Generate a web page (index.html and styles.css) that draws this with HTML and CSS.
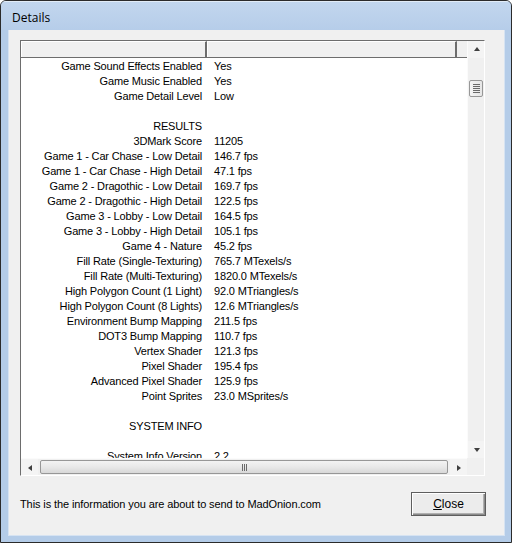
FILE: index.html
```html
<!DOCTYPE html>
<html lang="en">
<head>
    <meta charset="UTF-8">
    <title>Details</title>
    <link rel="stylesheet" href="styles.css">
</head>
<body>
<div class="window">
    <div class="titlebar">Details</div>
    <div class="client">
        <div class="listview">
            <div class="list_area">
                <div class="list_head">
                    <div class="col1"></div>
                    <div class="col2"></div>
                    <div class="filler"></div>
                </div>
                <div class="list_body">
                    <div class="row"><span class="name">Game Sound Effects Enabled</span><span class="value">Yes</span></div>
                    <div class="row"><span class="name">Game Music Enabled</span><span class="value">Yes</span></div>
                    <div class="row"><span class="name">Game Detail Level</span><span class="value">Low</span></div>
                    <div class="row"><span class="name"></span><span class="value"></span></div>
                    <div class="row"><span class="name">RESULTS</span><span class="value"></span></div>
                    <div class="row"><span class="name">3DMark Score</span><span class="value">11205</span></div>
                    <div class="row"><span class="name">Game 1 - Car Chase - Low Detail</span><span class="value">146.7 fps</span></div>
                    <div class="row"><span class="name">Game 1 - Car Chase - High Detail</span><span class="value">47.1 fps</span></div>
                    <div class="row"><span class="name">Game 2 - Dragothic - Low Detail</span><span class="value">169.7 fps</span></div>
                    <div class="row"><span class="name">Game 2 - Dragothic - High Detail</span><span class="value">122.5 fps</span></div>
                    <div class="row"><span class="name">Game 3 - Lobby - Low Detail</span><span class="value">164.5 fps</span></div>
                    <div class="row"><span class="name">Game 3 - Lobby - High Detail</span><span class="value">105.1 fps</span></div>
                    <div class="row"><span class="name">Game 4 - Nature</span><span class="value">45.2 fps</span></div>
                    <div class="row"><span class="name">Fill Rate (Single-Texturing)</span><span class="value">765.7 MTexels/s</span></div>
                    <div class="row"><span class="name">Fill Rate (Multi-Texturing)</span><span class="value">1820.0 MTexels/s</span></div>
                    <div class="row"><span class="name">High Polygon Count (1 Light)</span><span class="value">92.0 MTriangles/s</span></div>
                    <div class="row"><span class="name">High Polygon Count (8 Lights)</span><span class="value">12.6 MTriangles/s</span></div>
                    <div class="row"><span class="name">Environment Bump Mapping</span><span class="value">211.5 fps</span></div>
                    <div class="row"><span class="name">DOT3 Bump Mapping</span><span class="value">110.7 fps</span></div>
                    <div class="row"><span class="name">Vertex Shader</span><span class="value">121.3 fps</span></div>
                    <div class="row"><span class="name">Pixel Shader</span><span class="value">195.4 fps</span></div>
                    <div class="row"><span class="name">Advanced Pixel Shader</span><span class="value">125.9 fps</span></div>
                    <div class="row"><span class="name">Point Sprites</span><span class="value">23.0 MSprites/s</span></div>
                    <div class="row"><span class="name"></span><span class="value"></span></div>
                    <div class="row"><span class="name">SYSTEM INFO</span><span class="value"></span></div>
                    <div class="row"><span class="name"></span><span class="value"></span></div>
                    <div class="row"><span class="name">System Info Version</span><span class="value">2.2</span></div>
                </div>
            </div>
            <div class="vscroll">
                <div class="sb_btn"><i class="arrow up"></i></div>
                <div class="sb_track">
                    <div class="v_thumb"><i class="grip"></i></div>
                </div>
                <div class="sb_btn"><i class="arrow down"></i></div>
            </div>
            <div class="hscroll">
                <div class="sb_btn"><i class="arrow left"></i></div>
                <div class="sb_track h_track">
                    <div class="h_thumb"><i class="grip_h"></i></div>
                </div>
                <div class="sb_btn"><i class="arrow right"></i></div>
            </div>
            <div class="corner"></div>
        </div>
        <div class="footer">
            <span class="info">This is the information you are about to send to MadOnion.com</span>
            <button class="close_btn"><u>C</u>lose</button>
        </div>
    </div>
</div>
</body>
</html>
```

FILE: styles.css
```css
html, body {
    margin: 0;
    padding: 0;
    background: #fff;
}

.window {
    width: 510px;
    height: 541px;
    border: solid 1px #2b2b2b;
    border-radius: 6px 6px 0 0;
    background: #b4cce8;
    display: flex;
    flex-direction: column;
    overflow: hidden;
}

.titlebar {
    height: 29px;
    padding-left: 11px;
    line-height: 31px;
    font-family: "Open Sans", "Noto Sans", sans-serif;
    font-size: 12px;
    color: #000;
    background: linear-gradient(#c2d6ee, #b6cde9);
    border-top: solid 1px #e2ecf7;
    box-sizing: border-box;
}

.client {
    margin: 0 6px 6px 7px;
    flex: 1;
    background: #f0f0f0;
    border: solid 1px #d6e3f2;
    border-top: none;
    display: flex;
    flex-direction: column;
    padding: 10px 19px 0 11px;
}

/* the report list with both scrollbars */
.listview {
    height: 434px;
    border-top: solid 1px #6d6d6d;
    border-left: solid 1px #6d6d6d;
    border-right: solid 1px #fff;
    border-bottom: solid 1px #fff;
    display: grid;
    grid-template-columns: 1fr 17px;
    grid-template-rows: 1fr 17px;
    background: #fff;
}

.list_area {
    overflow: hidden;
    font-family: "Liberation Sans", Arial, sans-serif;
    font-size: 11px;
    letter-spacing: -0.15px;
    color: #000;
}

.list_head {
    display: flex;
    height: 17px;
    box-sizing: border-box;
    background: #f0f0f0;
    border-bottom: solid 1px #6d6d6d;
}

.list_head .col1 {
    width: 186px;
    border-right: solid 2px #6d6d6d;
    border-top: solid 1px #fff;
    border-left: solid 1px #fff;
    box-sizing: border-box;
}

.list_head .col2 {
    width: 250px;
    border-right: solid 2px #6d6d6d;
    border-top: solid 1px #fff;
    border-left: solid 1px #fff;
    box-sizing: border-box;
}

.list_head .filler {
    flex: 1;
}

.list_body {
    padding-top: 1px;
}

.row {
    display: flex;
    height: 15px;
    line-height: 15px;
    white-space: nowrap;
}

.row .name {
    width: 181px;
    padding-right: 5px;
    text-align: right;
}

.row .value {
    padding-left: 7px;
}

.vscroll {
    display: flex;
    flex-direction: column;
    background: #f4f4f4;
    border-left: solid 1px #fbfbfb;
}

.hscroll {
    display: flex;
    background: #f4f4f4;
    border-top: solid 1px #fbfbfb;
}

.sb_btn {
    width: 17px;
    height: 17px;
    flex-shrink: 0;
    display: flex;
    align-items: center;
    justify-content: center;
}

.sb_track {
    flex: 1;
    position: relative;
    background: #f0f0f0;
}

.corner {
    background: #f0f0f0;
}

.arrow {
    width: 0;
    height: 0;
    border: solid 3px transparent;
}

.arrow.up {
    border-bottom: solid 4px #404040;
    border-top: none;
    margin-bottom: 2px;
}

.arrow.down {
    border-top: solid 4px #404040;
    border-bottom: none;
}

.arrow.left {
    border-right: solid 4px #404040;
    border-left: none;
}

.arrow.right {
    border-left: solid 4px #404040;
    border-right: none;
}

.v_thumb {
    position: absolute;
    left: 1px;
    right: 1px;
    top: 22px;
    height: 17px;
    border: solid 1px #979797;
    border-radius: 2px;
    box-sizing: border-box;
    background: linear-gradient(90deg, #f4f4f4, #e6e6e6);
    display: flex;
    align-items: center;
    justify-content: center;
}

.grip {
    width: 7px;
    height: 1px;
    background: #6a6a6a;
    box-shadow: 0 -2px 0 #6a6a6a, 0 2px 0 #6a6a6a, 0 -4px 0 #6a6a6a, 0 4px 0 #6a6a6a;
}

.h_thumb {
    position: absolute;
    left: 2px;
    right: 2px;
    top: 1px;
    bottom: 1px;
    border: solid 1px #979797;
    border-radius: 2px;
    background: linear-gradient(#f3f3f3, #e8e8e8 50%, #d8d8d8);
    display: flex;
    align-items: center;
    justify-content: center;
}

.grip_h {
    width: 1px;
    height: 7px;
    background: #6a6a6a;
    box-shadow: -2px 0 0 #6a6a6a, 2px 0 0 #6a6a6a;
}

.footer {
    display: flex;
    align-items: center;
    justify-content: space-between;
    margin-top: 16px;
    margin-right: -1px;
    height: 24px;
}

.info {
    font-family: "Liberation Sans", Arial, sans-serif;
    font-size: 11px;
    letter-spacing: -0.1px;
    color: #000;
}

.close_btn {
    width: 75px;
    height: 24px;
    font-family: "Liberation Sans", Arial, sans-serif;
    font-size: 12px;
    color: #000;
    background: #ececec;
    border: solid 1px #5e5e5e;
    box-shadow: inset 1px 1px 0 #fff, inset -1px -1px 0 #8a8a8a, inset -2px -2px 0 #b0b0b0;
    padding: 0;
    outline: none;
}
```
